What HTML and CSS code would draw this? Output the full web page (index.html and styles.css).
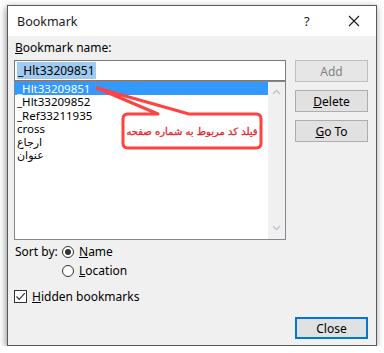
FILE: index.html
```html
<!DOCTYPE html>
<html lang="en">
<head>
  <meta charset="UTF-8">
  <title>Bookmark</title>
  <link rel="stylesheet" href="styles.css">
</head>
<body>
  <div class="dialog">
    <div class="title-bar">
      <span class="title">Bookmark</span>
      <span class="help">?</span>
      <span class="close-x">
        <svg width="12" height="12" viewBox="0 0 12 12"><path d="M1 1 L11 11 M11 1 L1 11" stroke="#1a1a1a" stroke-width="1.1" fill="none"/></svg>
      </span>
    </div>

    <div class="content">
      <div class="main">
        <div class="left">
          <div class="label"><u>B</u>ookmark name:</div>
          <div class="name-input"><span class="sel">_Hlt33209851</span></div>
          <div class="list">
            <ul class="items">
              <li class="selected">_Hlt33209851</li>
              <li>_Hlt33209852</li>
              <li>_Ref33211935</li>
              <li>cross</li>
              <li class="fa">ارجاع</li>
              <li class="fa">عنوان</li>
            </ul>
            <div class="scrollbar">
              <svg width="9" height="6" viewBox="0 0 9 6"><path d="M1 5 L4.5 1.5 L8 5" stroke="#c2c2c2" stroke-width="1.3" fill="none"/></svg>
              <svg width="9" height="6" viewBox="0 0 9 6"><path d="M1 1 L4.5 4.5 L8 1" stroke="#c2c2c2" stroke-width="1.3" fill="none"/></svg>
            </div>

            <!-- annotation callout drawn over the list -->
            <svg class="callout" width="260" height="80" viewBox="0 0 260 80">
              <path d="M113 32 L143 32 L82 6 L174 32 L241 32 Q246 32 246 37 L246 61 Q246 66 241 66 L113 66 Q108 66 108 61 L108 37 Q108 32 113 32 Z"
                    fill="#fff" stroke="#ff4242" stroke-width="3" stroke-linejoin="round"/>
            </svg>
            <div class="callout-text"><span dir="rtl">فیلد کد مربوط به شماره صفحه</span></div>
          </div>
        </div>

        <div class="buttons">
          <button class="btn disabled">Add</button>
          <button class="btn"><u>D</u>elete</button>
          <button class="btn"><u>G</u>o To</button>
        </div>
      </div>

      <div class="sort">
        <span class="sort-label">Sort by:</span>
        <div class="radios">
          <div class="radio-row"><span class="radio checked"></span><span><u>N</u>ame</span></div>
          <div class="radio-row"><span class="radio"></span><span><u>L</u>ocation</span></div>
        </div>
      </div>

      <div class="check-row">
        <span class="checkbox">
          <svg width="11" height="11" viewBox="0 0 11 11"><path d="M1.5 5.5 L4.2 8.3 L9.8 2.2" stroke="#333" stroke-width="1.2" fill="none"/></svg>
        </span>
        <span><u>H</u>idden bookmarks</span>
      </div>

      <div class="footer">
        <button class="btn default">Close</button>
      </div>
    </div>
  </div>
</body>
</html>
```

FILE: styles.css
```css
* {
  margin: 0;
  padding: 0;
  box-sizing: border-box;
}

body {
  background: #ffffff;
  padding: 5px 0 0 7px;
  font-family: "Noto Sans", "DejaVu Sans", sans-serif;
  font-size: 12px;
  color: #000;
}

.dialog {
  width: 370px;
  height: 341px;
  background: #f0f0f0;
  border: 1px solid #5a5a5a;
  box-shadow: -1px 2px 7px rgba(0, 0, 0, 0.45);
}

.title-bar {
  height: 30px;
  background: #ffffff;
  display: flex;
  align-items: center;
  padding-left: 9px;
}

.title {
  flex: 1;
  font-size: 12.5px;
  color: #1a1a1a;
}

.help {
  width: 14px;
  font-size: 13px;
  color: #1a1a1a;
  margin-right: 30px;
}

.close-x {
  width: 12px;
  height: 12px;
  margin-right: 16px;
  display: flex;
}

.content {
  padding: 4px 8px 0 6px;
}

.main {
  display: flex;
  gap: 9px;
}

.left {
  width: 272px;
}

.label {
  line-height: 16px;
  padding-left: 1px;
  margin-bottom: 4px;
}

.name-input {
  height: 21px;
  background: #fff;
  border: 1px solid #7a7a7a;
  padding: 2px 0 0 2px;
  line-height: 15px;
}

.name-input .sel {
  background: #9fcaf2;
  padding: 0 1px;
}

.list {
  position: relative;
  height: 159px;
  background: #fff;
  border: 1px solid #828790;
  display: flex;
}

.items {
  list-style: none;
  flex: 1;
  font-size: 11.5px;
}

.items li {
  height: 13.4px;
  line-height: 13.4px;
  padding-left: 2px;
}

.items li.selected {
  background: #3399ff;
  color: #fff;
}

.items li.fa {
  font-family: "DejaVu Sans", sans-serif;
  font-size: 11px;
}

.scrollbar {
  width: 17px;
  background: #f0f0f0;
  display: flex;
  flex-direction: column;
  justify-content: space-between;
  align-items: center;
  padding: 7px 0 8px;
}

.callout {
  position: absolute;
  left: 0;
  top: 0;
}

.callout-text {
  position: absolute;
  left: 108px;
  top: 32px;
  width: 138px;
  height: 34px;
  display: flex;
  align-items: center;
  justify-content: center;
  white-space: nowrap;
  font-family: "DejaVu Sans", sans-serif;
  font-size: 10px;
  color: #e8262b;
  -webkit-text-stroke: 0.3px #e8262b;
}

.buttons {
  display: flex;
  flex-direction: column;
  gap: 8px;
  padding-top: 20px;
}

.btn {
  width: 73px;
  height: 22px;
  background: #e1e1e1;
  border: 1px solid #adadad;
  font-family: "Noto Sans", sans-serif;
  font-size: 12px;
  color: #000;
}

.btn.disabled {
  color: #838383;
  border-color: #bfbfbf;
  background: #e6e6e6;
}

.btn.default {
  border: 2px solid #0078d7;
}

.sort {
  display: flex;
  padding-left: 1px;
  margin-top: 2px;
}

.sort-label {
  width: 47px;
  line-height: 19px;
}

.radio-row {
  display: flex;
  align-items: center;
  height: 19px;
  gap: 5px;
}

.radio {
  width: 12px;
  height: 12px;
  border: 1px solid #333;
  border-radius: 50%;
  background: #fff;
  position: relative;
}

.radio.checked::after {
  content: "";
  position: absolute;
  left: 2px;
  top: 2px;
  width: 6px;
  height: 6px;
  border-radius: 50%;
  background: #333;
}

.check-row {
  display: flex;
  align-items: center;
  gap: 5px;
  margin-top: 10px;
  height: 13px;
}

.checkbox {
  width: 13px;
  height: 13px;
  border: 1px solid #333;
  background: #fff;
  display: flex;
  align-items: center;
  justify-content: center;
}

.footer {
  display: flex;
  justify-content: flex-end;
  margin-top: 14px;
}
```
